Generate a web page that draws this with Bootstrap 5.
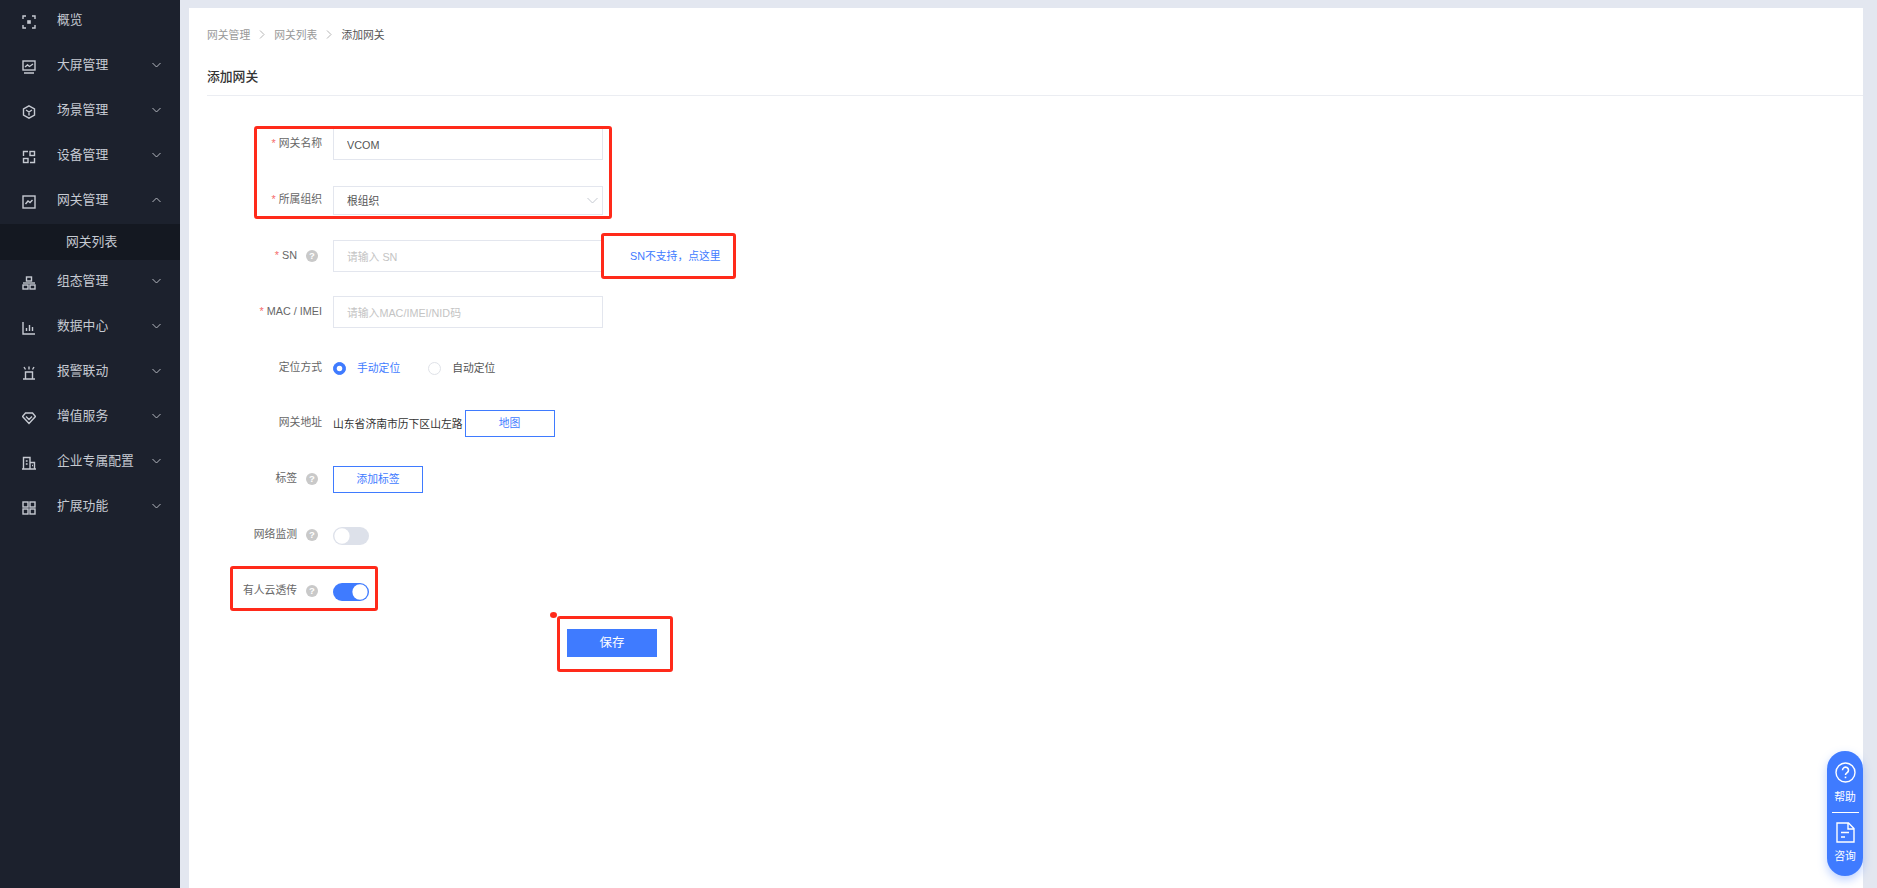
<!DOCTYPE html>
<html lang="zh-CN">
<head>
  <meta charset="UTF-8">
  <title>添加网关</title>
  <link rel="stylesheet" href="https://cdn.jsdelivr.net/npm/bootstrap@5.3.1/dist/css/bootstrap.min.css">
  <style>
    body {
      height: 888px;
      overflow: hidden;
      background: #e3e7f0;
      font-family: "Liberation Sans", "Noto Sans CJK SC", sans-serif;
      font-size: 10.8px;
      color: #666;
    }
    .side-bar { width: 180px; flex: none; height: 888px; background: #1c212d; overflow: hidden; padding-top: 0; }
    .side-list { margin-top: -1px; }
    .side-row { height: 45px; padding-left: 22px; color: #c6cad2; font-size: 12.8px; }
    .side-row svg.ico { width: 14px; height: 14px; flex: none; margin-right: 21px; margin-top: 1px; fill: none; stroke: #c6cad2; stroke-width: 1.4; }
    .side-row .side-txt { padding-bottom: 3px; flex: 1; }
    .side-row .chev { width: 9px; height: 6px; flex: none; margin-right: 19px; margin-bottom: 3px; fill: none; stroke: #b4b8c0; stroke-width: 1; }
    .side-sub { height: 36px; background: #141821; color: #c6cad2; font-size: 12.8px; padding-left: 66px; }
    .page-wrap { flex: 1; height: 888px; padding: 8px 14px 0 9px; }
    .page-body { background: #fff; height: 880px; padding-left: 18px; }
    .crumbs { height: 54px; padding-top: 20px; font-size: 10.8px; line-height: 14px; }
    .crumbs .breadcrumb {
      --bs-breadcrumb-divider: url("data:image/svg+xml,%3Csvg xmlns='http://www.w3.org/2000/svg' width='6' height='9'%3E%3Cpath d='M1 .5l4 4-4 4' fill='none' stroke='%23b5b5b5'/%3E%3C/svg%3E");
      --bs-breadcrumb-item-padding-x: 9px;
      --bs-breadcrumb-margin-bottom: 0;
    }
    .crumbs .breadcrumb-item { color: #999; }
    .crumbs .breadcrumb-item.active { color: #555; }
    .crumbs .breadcrumb-item + .breadcrumb-item::before { line-height: 14px; }
    .page-title { height: 34px; margin: 0; font-size: 12.8px; font-weight: 500; line-height: 30px; color: #333; border-bottom: 1px solid #ebedf2; }
    .form-area { margin-left: -18px; padding-top: 20.5px; }
    .frm-row { height: 55.9px; }
    .frm-label { width: 133px; flex: none; margin-right: 11px; padding-bottom: 3px; text-align: right; line-height: 14px; }
    .frm-req { color: #f56c6c; margin-right: 3px; }
    .tip-dot { display: inline-block; width: 12px; height: 12px; margin-left: 9px; margin-right: 4px; border-radius: 50%; background: #c9c9c9; color: #fff; font-size: 9.5px; font-weight: 700; line-height: 12px; text-align: center; vertical-align: 0; }
    .frm-input.form-control, .frm-input.form-select { width: 270px; height: 32px; padding: 1px 13px 0; border: 1px solid #e3e6ee; border-radius: 0; font-size: 10.8px; color: #555; }
    .frm-input.form-control::placeholder { color: #c4c4c4; }
    .frm-input.form-select {
      height: 29px;
      background-image: url("data:image/svg+xml,%3Csvg xmlns='http://www.w3.org/2000/svg' width='11' height='7'%3E%3Cpath d='M.5 1l5 5 5-5' fill='none' stroke='%23c4c8d0'/%3E%3C/svg%3E");
      background-size: 11px 7px;
      background-position: right 4px center;
    }
    .sn-link { margin-left: 27px; color: #3f7bff; text-decoration: none; font-size: 10.8px; }
    .frm-radio { width: 13px; height: 13px; margin: 0 11px 0 0; border-color: #dfe2e8; }
    .frm-radio:checked { background-color: #3f7bff; border-color: #3f7bff; }
    .radio-gap { margin-left: 28px; }
    .radio-on { color: #3f7bff; }
    .radio-off { color: #555; }
    .addr-txt { color: #333; margin-right: 2px; }
    .line-btn.btn { height: 27px; padding: 0; border: 1px solid #3f7bff; border-radius: 0; background: #fff; color: #3f7bff; font-size: 10.8px; line-height: 25px; text-align: center; }
    .map-btn { width: 90px; }
    .tag-btn { width: 90px; }
    .frm-switch { min-height: 0; padding: 0; margin: 0; }
    .frm-switch .form-check-input {
      width: 36px; height: 18px; margin: 0; border: 0;
      background-color: #dde1ea;
      background-image: url("data:image/svg+xml,%3Csvg xmlns='http://www.w3.org/2000/svg' viewBox='-4 -4 8 8'%3E%3Ccircle r='3.4' fill='%23fff'/%3E%3C/svg%3E");
    }
    .frm-switch .form-check-input:checked { background-color: #3f7bff; }
    .save-btn.btn { width: 90px; height: 28px; margin: 9.5px 0 0 378px; padding: 0; border: 0; border-radius: 0; background: #3f7bff; color: #fff; font-size: 12.5px; }
    /* red marks drawn on top of the screenshot */
    .mark-box { position: absolute; border: 3px solid #ff2a1a; border-radius: 3px; pointer-events: none; }
    .mark-a { left: 254px; top: 126px; width: 358px; height: 93px; }
    .mark-b { left: 601px; top: 233px; width: 135px; height: 46px; }
    .mark-c { left: 230px; top: 566px; width: 148px; height: 45px; }
    .mark-d { left: 557px; top: 616px; width: 116px; height: 56px; }
    .mark-dot { position: absolute; left: 550px; top: 612px; width: 7px; height: 6px; border-radius: 50%; background: #ff2a1a; }
    .help-float { position: absolute; left: 1827px; top: 751px; width: 36px; height: 125px; border-radius: 18px; background: #3f7bff; color: #fff; font-size: 10.8px; box-shadow: 0 4px 10px rgba(63, 123, 255, .35); padding-top: 11px; }
    .help-float svg { display: block; margin: 0 auto; fill: none; stroke: #fff; }
    .help-line { width: 27px; height: 1px; background: #fff; margin: 8px auto 9px; }
    .help-cap { line-height: 14px; margin-top: 6px; }
    .help-cap-top { margin-top: 7px; }
  </style>
</head>
<body>
  <div class="d-flex">
    <div class="side-bar">
      <div class="side-list">
        <div class="side-row d-flex align-items-center">
          <svg class="ico" viewBox="0 0 14 14"><path d="M4 1H1v3M10 1h3v3M4 13H1v-3M10 13h3v-3"/><rect x="5.200" y="5.200" width="3.600" height="3.600" fill="#c6cad2" stroke="none"/></svg>
          <span class="side-txt">概览</span>
        </div>
        <div class="side-row d-flex align-items-center">
          <svg class="ico" viewBox="0 0 14 14"><rect x="1" y="1" width="12" height="9"/><path d="M3 7l2.500-2 2 1.500L11 4M2 13h10"/></svg>
          <span class="side-txt">大屏管理</span>
          <svg class="chev" viewBox="0 0 9 6"><path d="M.5 1l4 4 4-4"/></svg>
        </div>
        <div class="side-row d-flex align-items-center">
          <svg class="ico" viewBox="0 0 14 14"><path d="M7 .8l5.500 3.100v6.200L7 13.200 1.500 10.100V3.900zM4 5l3 2 3-2M7 7v3.500"/></svg>
          <span class="side-txt">场景管理</span>
          <svg class="chev" viewBox="0 0 9 6"><path d="M.5 1l4 4 4-4"/></svg>
        </div>
        <div class="side-row d-flex align-items-center">
          <svg class="ico" viewBox="0 0 14 14"><path d="M6 1.500H1.500V6M8 12.500h4.500V8"/><rect x="8" y="1.500" width="4.500" height="4"/><rect x="1.500" y="8.500" width="4.500" height="4"/></svg>
          <span class="side-txt">设备管理</span>
          <svg class="chev" viewBox="0 0 9 6"><path d="M.5 1l4 4 4-4"/></svg>
        </div>
        <div class="side-row d-flex align-items-center">
          <svg class="ico" viewBox="0 0 14 14"><rect x="1" y="1" width="12" height="12"/><path d="M3.500 9l2.500-3 2 1.500L10.500 5"/></svg>
          <span class="side-txt">网关管理</span>
          <svg class="chev" viewBox="0 0 9 6"><path d="M.5 5l4-4 4 4"/></svg>
        </div>
        <div class="side-sub d-flex align-items-center">网关列表</div>
        <div class="side-row d-flex align-items-center">
          <svg class="ico" viewBox="0 0 14 14"><rect x="4.500" y="1" width="5" height="4"/><path d="M1 7h12"/><rect x="1" y="9" width="5" height="4"/><rect x="8" y="9" width="5" height="4"/></svg>
          <span class="side-txt">组态管理</span>
          <svg class="chev" viewBox="0 0 9 6"><path d="M.5 1l4 4 4-4"/></svg>
        </div>
        <div class="side-row d-flex align-items-center">
          <svg class="ico" viewBox="0 0 14 14"><path d="M1 1v12h12M4.500 10V7M7.500 10V4M10.500 10V6"/></svg>
          <span class="side-txt">数据中心</span>
          <svg class="chev" viewBox="0 0 9 6"><path d="M.5 1l4 4 4-4"/></svg>
        </div>
        <div class="side-row d-flex align-items-center">
          <svg class="ico" viewBox="0 0 14 14"><path d="M1 13h12M3.500 13V6h7v7M7 .5v3M2 1l1.500 2.500M12 1l-1.500 2.500"/></svg>
          <span class="side-txt">报警联动</span>
          <svg class="chev" viewBox="0 0 9 6"><path d="M.5 1l4 4 4-4"/></svg>
        </div>
        <div class="side-row d-flex align-items-center">
          <svg class="ico" viewBox="0 0 14 14"><path d="M3.500 2h7L13.500 5.500 7 12.500.5 5.500zM4 5.500L7 8.500l3-3"/></svg>
          <span class="side-txt">增值服务</span>
          <svg class="chev" viewBox="0 0 9 6"><path d="M.5 1l4 4 4-4"/></svg>
        </div>
        <div class="side-row d-flex align-items-center">
          <svg class="ico" viewBox="0 0 14 14"><path d="M0 13h14M1.500 13V1.500h6.500V13M8 6.500h4.500V13M3.800 5h1.800M3.800 8h1.800M10 9.500h1"/></svg>
          <span class="side-txt">企业专属配置</span>
          <svg class="chev" viewBox="0 0 9 6"><path d="M.5 1l4 4 4-4"/></svg>
        </div>
        <div class="side-row d-flex align-items-center">
          <svg class="ico" viewBox="0 0 14 14"><rect x="1" y="1" width="5" height="5"/><rect x="8" y="1" width="5" height="5"/><rect x="1" y="8" width="5" height="5"/><rect x="8" y="8" width="5" height="5"/></svg>
          <span class="side-txt">扩展功能</span>
          <svg class="chev" viewBox="0 0 9 6"><path d="M.5 1l4 4 4-4"/></svg>
        </div>
      </div>
    </div>

    <div class="page-wrap">
      <div class="page-body">
        <nav class="crumbs">
          <ol class="breadcrumb">
            <li class="breadcrumb-item">网关管理</li>
            <li class="breadcrumb-item">网关列表</li>
            <li class="breadcrumb-item active">添加网关</li>
          </ol>
        </nav>
        <h1 class="page-title">添加网关</h1>

        <form class="form-area">
          <div class="frm-row d-flex align-items-center">
            <label class="frm-label"><span class="frm-req">*</span>网关名称</label>
            <input class="frm-input form-control" type="text" value="VCOM">
          </div>
          <div class="frm-row d-flex align-items-center">
            <label class="frm-label"><span class="frm-req">*</span>所属组织</label>
            <select class="frm-input form-select"><option>根组织</option></select>
          </div>
          <div class="frm-row d-flex align-items-center">
            <label class="frm-label"><span class="frm-req">*</span>SN<span class="tip-dot">?</span></label>
            <input class="frm-input form-control" type="text" placeholder="请输入 SN">
            <a class="sn-link" href="#">SN不支持，点这里</a>
          </div>
          <div class="frm-row d-flex align-items-center">
            <label class="frm-label"><span class="frm-req">*</span>MAC / IMEI</label>
            <input class="frm-input form-control" type="text" placeholder="请输入MAC/IMEI/NID码">
          </div>
          <div class="frm-row d-flex align-items-center">
            <label class="frm-label">定位方式</label>
            <input class="frm-radio form-check-input" type="radio" name="locate" checked>
            <span class="radio-on">手动定位</span>
            <input class="frm-radio form-check-input radio-gap" type="radio" name="locate">
            <span class="radio-off">自动定位</span>
          </div>
          <div class="frm-row d-flex align-items-center">
            <label class="frm-label">网关地址</label>
            <span class="addr-txt">山东省济南市历下区山左路</span>
            <button class="line-btn map-btn btn" type="button">地图</button>
          </div>
          <div class="frm-row d-flex align-items-center">
            <label class="frm-label">标签<span class="tip-dot">?</span></label>
            <button class="line-btn tag-btn btn" type="button">添加标签</button>
          </div>
          <div class="frm-row d-flex align-items-center">
            <label class="frm-label">网络监测<span class="tip-dot">?</span></label>
            <div class="frm-switch form-check form-switch"><input class="form-check-input" type="checkbox"></div>
          </div>
          <div class="frm-row d-flex align-items-center">
            <label class="frm-label">有人云透传<span class="tip-dot">?</span></label>
            <div class="frm-switch form-check form-switch"><input class="form-check-input" type="checkbox" checked></div>
          </div>
          <button class="save-btn btn" type="button">保存</button>
        </form>
      </div>
    </div>
  </div>

  <div class="mark-box mark-a"></div>
  <div class="mark-box mark-b"></div>
  <div class="mark-box mark-c"></div>
  <div class="mark-box mark-d"></div>
  <div class="mark-dot"></div>

  <div class="help-float text-center">
    <svg width="21" height="21" viewBox="0 0 21 21" stroke-width="1.4"><circle cx="10.500" cy="10.500" r="9.500"/><path d="M7.500 8.200a3 3 0 1 1 4.600 2.500c-1 .7-1.600 1.200-1.600 2.300" stroke-width="1.600"/><path d="M10.500 14.600v1.600" stroke-width="1.600"/></svg>
    <div class="help-cap help-cap-top">帮助</div>
    <div class="help-line"></div>
    <svg width="19" height="21" viewBox="0 0 19 21" stroke-width="1.4"><path d="M1 1h11.500L18 6.500V20H1zM12 1v6h6M5 10.500h8M5 15h4"/></svg>
    <div class="help-cap">咨询</div>
  </div>

  <script src="https://cdn.jsdelivr.net/npm/bootstrap@5.3.1/dist/js/bootstrap.bundle.min.js"></script>
</body>
</html>
